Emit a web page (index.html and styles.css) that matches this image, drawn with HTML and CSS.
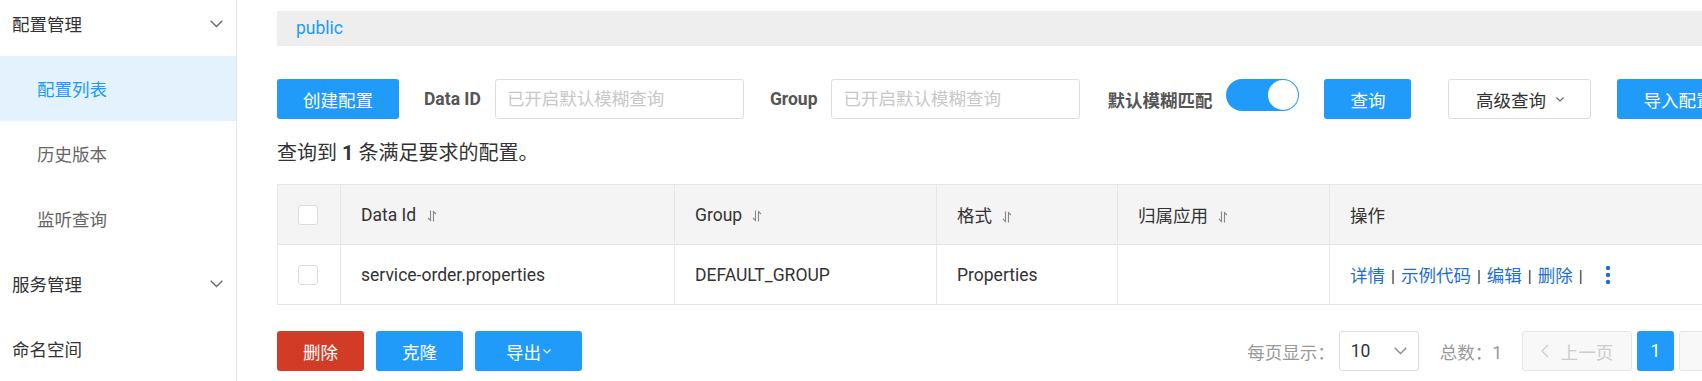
FILE: index.html
```html
<!DOCTYPE html>
<html lang="zh-CN">

<head>
  <meta charset="UTF-8">
  <meta name="viewport" content="width=device-width, initial-scale=1.0">
  <title>配置列表</title>
  <link rel="stylesheet" href="styles.css">
</head>

<body>
  <div class="layout">
    <aside class="sidebar">
      <ul class="menu">
        <li class="menu-group">配置管理
          <svg class="chevron" viewBox="0 0 13 8"><polyline points="0.7,0.7 6.5,6.5 12.3,0.7" /></svg>
        </li>
        <li class="menu-item active">配置列表</li>
        <li class="menu-item">历史版本</li>
        <li class="menu-item">监听查询</li>
        <li class="menu-group">服务管理
          <svg class="chevron" viewBox="0 0 13 8"><polyline points="0.7,0.7 6.5,6.5 12.3,0.7" /></svg>
        </li>
        <li class="menu-group">命名空间</li>
      </ul>
    </aside>

    <main class="main">
      <div class="content">
        <div class="namespace-bar">public</div>

        <div class="toolbar">
          <button class="btn btn-primary btn-create">创建配置</button>
          <label class="field-label" for="dataId">Data ID</label>
          <input class="field-input" type="text" id="dataId" placeholder="已开启默认模糊查询">
          <label class="field-label label-group" for="group">Group</label>
          <input class="field-input" type="text" id="group" placeholder="已开启默认模糊查询">
          <span class="field-label label-fuzzy">默认模糊匹配</span>
          <span class="switch"><span class="switch-knob"></span></span>
          <button class="btn btn-primary btn-query">查询</button>
          <button class="btn btn-normal btn-advanced">高级查询
            <svg class="mini-arrow" viewBox="0 0 8 5"><polyline points="0.5,0.5 4,4 7.5,0.5" /></svg>
          </button>
          <button class="btn btn-primary btn-import">导入配置</button>
        </div>

        <p class="result">查询到 <b>1</b> 条满足要求的配置。</p>

        <table class="config-table">
          <colgroup>
            <col style="width: 63px">
            <col style="width: 334px">
            <col style="width: 262px">
            <col style="width: 181px">
            <col style="width: 212px">
            <col>
          </colgroup>
          <thead>
            <tr>
              <th class="cell-check"><span class="checkbox"></span></th>
              <th>Data Id <svg class="sort" viewBox="0 0 10 12"><path d="M1 8 L3.5 10.5 L3.5 0.5 M6.5 11.5 L6.5 1.5 L9 4" /></svg></th>
              <th>Group <svg class="sort" viewBox="0 0 10 12"><path d="M1 8 L3.5 10.5 L3.5 0.5 M6.5 11.5 L6.5 1.5 L9 4" /></svg></th>
              <th>格式 <svg class="sort" viewBox="0 0 10 12"><path d="M1 8 L3.5 10.5 L3.5 0.5 M6.5 11.5 L6.5 1.5 L9 4" /></svg></th>
              <th>归属应用 <svg class="sort" viewBox="0 0 10 12"><path d="M1 8 L3.5 10.5 L3.5 0.5 M6.5 11.5 L6.5 1.5 L9 4" /></svg></th>
              <th>操作</th>
            </tr>
          </thead>
          <tbody>
            <tr>
              <td class="cell-check"><span class="checkbox"></span></td>
              <td>service-order.properties</td>
              <td>DEFAULT_GROUP</td>
              <td>Properties</td>
              <td></td>
              <td class="actions">
                <a href="#">详情</a><span class="sep">|</span><a href="#">示例代码</a><span class="sep">|</span><a href="#">编辑</a><span class="sep">|</span><a href="#">删除</a><span class="sep">|</span>
                <svg class="more" viewBox="0 0 6 20"><circle cx="3" cy="3" r="2.2" /><circle cx="3" cy="10" r="2.2" /><circle cx="3" cy="17" r="2.2" /></svg>
              </td>
            </tr>
          </tbody>
        </table>

        <div class="footer">
          <div class="batch">
            <button class="btn btn-danger btn-small">删除</button>
            <button class="btn btn-primary btn-small">克隆</button>
            <button class="btn btn-primary btn-export">导出
              <svg class="mini-arrow light" viewBox="0 0 8 5"><polyline points="0.5,0.5 4,4 7.5,0.5" /></svg>
            </button>
          </div>
          <div class="pagination">
            <span class="page-text">每页显示：</span>
            <span class="page-size">10
              <svg class="select-arrow" viewBox="0 0 13 8"><polyline points="0.7,0.7 6.5,6.5 12.3,0.7" /></svg>
            </span>
            <span class="page-text page-total">总数：1</span>
            <span class="page-btn disabled">
              <svg class="prev-arrow" viewBox="0 0 8 14"><polyline points="7,1 1,7 7,13" /></svg>
              上一页
            </span>
            <span class="page-btn current">1</span>
            <span class="page-btn disabled">下一页</span>
          </div>
        </div>
      </div>
    </main>
  </div>
</body>

</html>
```

FILE: styles.css
```css
* {
  margin: 0;
  padding: 0;
  box-sizing: border-box;
  font-family: Roboto, 'Noto Sans CJK SC', sans-serif;
}

body {
  background-color: #fff;
  color: #333;
  font-size: 17.5px;
  height: 381px;
  overflow: hidden;
}

.layout {
  display: flex;
  height: 100%;
}

/* Sidebar */
.sidebar {
  width: 237px;
  flex-shrink: 0;
  border-right: 1px solid #e6e6e6;
  overflow: hidden;
}

.menu {
  list-style: none;
  margin-top: -9px;
}

.menu li {
  height: 65px;
  display: flex;
  align-items: center;
  white-space: nowrap;
}

.menu-group {
  padding: 0 13px 0 12px;
  color: #333;
  justify-content: space-between;
}

.menu-item {
  padding-left: 37px;
  color: #666;
}

.menu-item.active {
  background-color: #e3f2fd;
  color: #209bfa;
}

.chevron {
  width: 13px;
  height: 8px;
  fill: none;
  stroke: #666;
  stroke-width: 1.3;
}

/* Main */
.main {
  flex: 1;
  min-width: 0;
  overflow: hidden;
  padding: 11px 0 0 40px;
}

.content {
  width: 1512px;
}

.namespace-bar {
  height: 35px;
  line-height: 35px;
  background-color: #eeeeee;
  padding-left: 19px;
  color: #209bfa;
}

.toolbar {
  display: flex;
  align-items: center;
  height: 40px;
  margin-top: 33px;
  white-space: nowrap;
}

.btn {
  height: 40px;
  border: none;
  border-radius: 3px;
  font-size: 17.5px;
  cursor: pointer;
  display: inline-flex;
  align-items: center;
  justify-content: center;
  white-space: nowrap;
}

.btn-primary {
  background-color: #209bfa;
  color: #fff;
}

.btn-danger {
  background-color: #d23c26;
  color: #fff;
}

.btn-normal {
  background-color: #fff;
  color: #333;
  border: 1px solid #dcdcdc;
}

.btn-create {
  width: 122px;
  margin-right: 25px;
}

.field-label {
  font-weight: 700;
  color: #555;
  margin-right: 14px;
}

.label-group {
  margin-left: 26px;
  margin-right: 14px;
}

.label-fuzzy {
  margin-left: 27px;
  margin-right: 14px;
}

.field-input {
  width: 249px;
  height: 40px;
  border: 1px solid #dcdcdc;
  border-radius: 3px;
  padding-left: 11px;
  font-size: 17.5px;
  color: #333;
}

.field-input::placeholder {
  color: #c8c8c8;
}

.switch {
  width: 73px;
  height: 32px;
  border-radius: 16px;
  background-color: #209bfa;
  display: flex;
  align-items: center;
  justify-content: flex-end;
  padding-right: 1px;
  margin-bottom: 8px;
}

.switch-knob {
  width: 30px;
  height: 30px;
  border-radius: 50%;
  background-color: #fff;
}

.btn-query {
  width: 87px;
  margin-left: 25px;
}

.btn-advanced {
  width: 143px;
  margin-left: 37px;
  gap: 10px;
}

.btn-import {
  width: 122px;
  margin-left: 26px;
}

.mini-arrow {
  width: 8px;
  height: 5px;
  fill: none;
  stroke: #666;
  stroke-width: 1.1;
}

.mini-arrow.light {
  stroke: #fff;
}

.result {
  margin-top: 22px;
  font-size: 20px;
  line-height: 24px;
  color: #333;
}

.result b {
  font-weight: 700;
}

/* Table */
.config-table {
  width: 100%;
  margin-top: 19px;
  border-collapse: collapse;
  table-layout: fixed;
}

.config-table th,
.config-table td {
  height: 60px;
  border: 1px solid #e6e6e6;
  padding: 0 0 0 20px;
  text-align: left;
  font-weight: 400;
  color: #333;
  white-space: nowrap;
}

.config-table th {
  background-color: #f4f4f4;
}

.checkbox {
  display: block;
  width: 20px;
  height: 20px;
  border: 1px solid #dcdcdc;
  border-radius: 3px;
  background-color: #fff;
}

.sort {
  width: 10px;
  height: 12px;
  margin-left: 6px;
  vertical-align: -1px;
  fill: none;
  stroke: #888;
  stroke-width: 1.1;
}

.actions {
  color: #1f6fd1;
}

.actions a {
  color: #1f6fd1;
  text-decoration: none;
}

.actions .sep {
  margin: 0 6px;
  font-size: 16px;
}

.more {
  width: 6px;
  height: 20px;
  margin-left: 12px;
  vertical-align: -3px;
  fill: #1f6fd1;
}

/* Footer */
.footer {
  display: flex;
  justify-content: space-between;
  align-items: center;
  margin-top: 26px;
}

.batch {
  display: flex;
  gap: 12px;
}

.btn-small {
  width: 87px;
}

.btn-export {
  width: 107px;
  gap: 2px;
}

.pagination {
  display: flex;
  align-items: center;
  white-space: nowrap;
}

.page-text {
  color: #999;
}

.page-size {
  width: 80px;
  height: 40px;
  margin-left: 4px;
  border: 1px solid #dcdcdc;
  border-radius: 3px;
  display: flex;
  align-items: center;
  justify-content: space-between;
  padding: 0 11px;
  color: #333;
}

.select-arrow {
  width: 13px;
  height: 8px;
  fill: none;
  stroke: #888;
  stroke-width: 1.3;
}

.page-total {
  margin-left: 21px;
}

.page-btn {
  height: 40px;
  border-radius: 3px;
  display: flex;
  align-items: center;
  justify-content: center;
  margin-left: 5px;
}

.page-btn.disabled {
  width: 110px;
  background-color: #f8f8f8;
  border: 1px solid #e6e6e6;
  color: #ccc;
  gap: 12px;
}

.page-total + .page-btn {
  margin-left: 20px;
}

.page-btn.current {
  width: 37px;
  background-color: #209bfa;
  color: #fff;
}

.prev-arrow {
  width: 8px;
  height: 14px;
  fill: none;
  stroke: #ccc;
  stroke-width: 1.3;
}
```
